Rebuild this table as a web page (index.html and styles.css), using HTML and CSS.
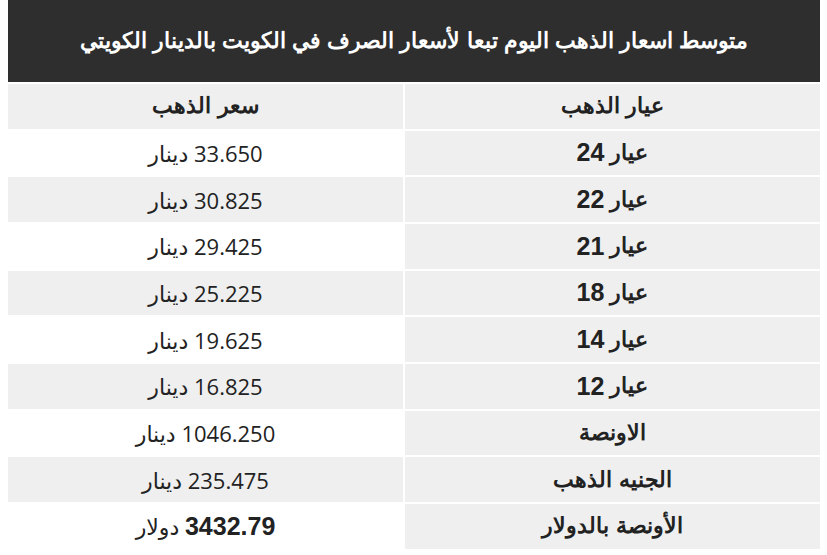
FILE: index.html
```html
<!DOCTYPE html>
<html lang="ar" dir="rtl">
<head>
<meta charset="utf-8">
<link rel="stylesheet" href="styles.css">
</head>
<body>
<div class="table">
  <div class="title">متوسط اسعار الذهب اليوم تبعا لأسعار الصرف في الكويت بالدينار الكويتي</div>
  <div class="row head"><div class="k">عيار الذهب</div><div class="v">سعر الذهب</div></div>
  <div class="row"><div class="k">عيار <span class="n">24</span></div><div class="v">33.650 دينار</div></div>
  <div class="row alt"><div class="k">عيار <span class="n">22</span></div><div class="v">30.825 دينار</div></div>
  <div class="row"><div class="k">عيار <span class="n">21</span></div><div class="v">29.425 دينار</div></div>
  <div class="row alt"><div class="k">عيار <span class="n">18</span></div><div class="v">25.225 دينار</div></div>
  <div class="row"><div class="k">عيار <span class="n">14</span></div><div class="v">19.625 دينار</div></div>
  <div class="row alt"><div class="k">عيار <span class="n">12</span></div><div class="v">16.825 دينار</div></div>
  <div class="row"><div class="k">الاونصة</div><div class="v">1046.250 دينار</div></div>
  <div class="row alt"><div class="k">الجنيه الذهب</div><div class="v">235.475 دينار</div></div>
  <div class="row"><div class="k">الأونصة بالدولار</div><div class="v"><b>3432.79</b> دولار</div></div>
</div>
</body>
</html>
```
FILE: styles.css
```css
html, body {
  margin: 0;
  background: #fff;
}
body {
  padding: 0 7px 0 8px;
  font-family: "Liberation Sans", Arial, sans-serif;
  color: #222;
}
.table {
  display: grid;
  grid-template-rows: 82px repeat(10, 44.67px);
  row-gap: 2px;
  width: 812px;
}
.title {
  background: #2e2e2e;
  color: #fff;
  font-weight: bold;
  font-size: 22px;
  display: flex;
  align-items: center;
  justify-content: center;
}
.row {
  display: grid;
  grid-template-columns: 415px 395px;
  column-gap: 2px;
}
.row > div {
  display: flex;
  align-items: center;
  justify-content: center;
  white-space: pre;
}
.k {
  background: #efefef;
  font-weight: bold;
  font-size: 22px;
}
.k .n {
  font-size: 25px;
}
.v {
  background: #fff;
  font-family: "Open Sans", "DejaVu Sans", sans-serif;
  font-size: 22px;
}
.row.alt .v, .row.head .v {
  background: #efefef;
}
.row.head .v {
  font-family: "Liberation Sans", Arial, sans-serif;
  font-weight: bold;
  font-size: 22px;
}
.v b {
  font-family: "Liberation Sans", Arial, sans-serif;
  font-size: 25px;
}
```
